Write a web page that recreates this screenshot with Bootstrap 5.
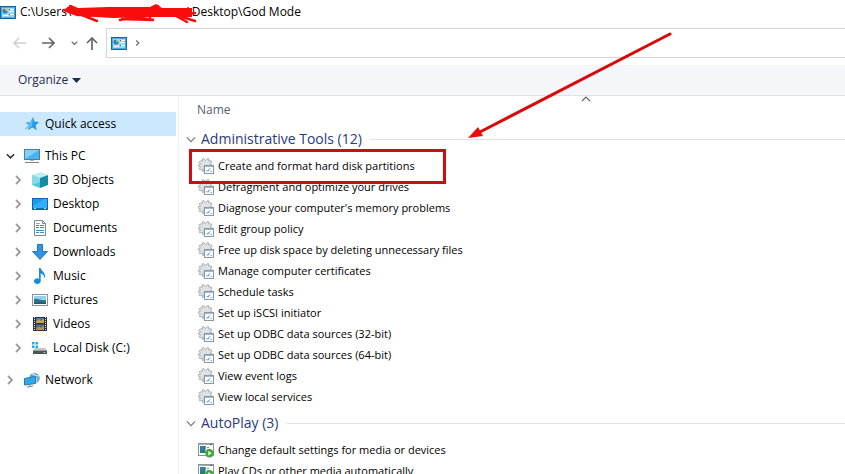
<!DOCTYPE html>
<html lang="en">
<head>
<meta charset="utf-8">
<meta name="viewport" content="width=device-width, initial-scale=1">
<title>God Mode</title>
<link href="https://cdn.jsdelivr.net/npm/bootstrap@5.3.0/dist/css/bootstrap.min.css" rel="stylesheet">
<style>
  body { font: 12px/20px "Open Sans", "Noto Sans", sans-serif; color: #000; background: #fff; }
  svg { display: block; flex: none; }
  a { color: inherit; text-decoration: none; }
  button { border: 0; padding: 0; background: none; color: inherit; line-height: inherit; }
  .titlebar { height: 28px; padding-bottom: 4px; }
  .hidden-part { width: 116px; }
  .navrow { height: 30px; padding-left: 13px; }
  .navrow .arrows { width: 93px; color: #666; }
  .address { border: 1px solid #d6d6d6; border-right: 0; color: #666; }
  .commands { margin-top: 7px; height: 31px; background: #f4f6f9; border-bottom: 1px solid #dfe3e8; color: #1e2b4c; padding-left: 18px; }
  .sidebar { width: 179px; padding-top: 16px; border-right: 1px solid #f1f1f1; }
  .tree-row { height: 24px; padding-left: 6px; }
  .tree-row button { width: 18px; color: #999; }
  .tree-row a { gap: 5px; }
  .tree-row.child { padding-left: 14px; }
  .tree-row.selected { background: #cce8ff; margin-right: 2px; padding-left: 24px; }
  .tree-row.open button { color: #333; }
  .space-after { margin-bottom: 8px; }
  .files { padding-left: 7px; }
  .column-head { height: 27px; padding-left: 11px; color: #57606f; }
  .sort-mark { left: 60%; top: 0; }
  .group-head { height: 32px; font-size: 14px; color: #273a83; gap: 5px; }
  .group-head svg { color: #777; }
  .group-line { height: 1px; background: #dfe1e5; margin-left: 3px; }
  .entry { height: 21px; padding-left: 12px; gap: 4px; font-size: 11px; }
  .callout { left: 10px; top: 53px; height: 35px; width: 257px; border: 3px solid #d20a11; }
</style>
<script src="https://cdn.jsdelivr.net/npm/bootstrap@5.3.0/dist/js/bootstrap.bundle.min.js"></script>
</head>
<body class="vh-100 overflow-hidden position-relative d-flex flex-column">

<svg class="d-none" aria-hidden="true">
  <symbol id="panel" viewBox="0 0 16 13">
    <rect x=".5" y=".5" width="15" height="12" fill="#9ed6f2" stroke="#17659c"/>
    <path d="M1.500 1.500h13v10h-13z" fill="none" stroke="#4aa9dc"/>
    <circle cx="5" cy="5" r="2.400" fill="#fff"/><path d="M5 5V2.400A2.600 2.600 0 0 1 7.600 5z" fill="#e9a13b"/><path d="M5 5h2.600A2.600 2.600 0 1 1 5 2.400z" fill="#2784c4"/>
    <path d="M9.500 3.500h4M9.500 5.500h4M9.500 8.500h4M3 9.500h5" stroke="#fff"/><path d="M9 3.500h1M9 8.500h1" stroke="#1769a5"/>
  </symbol>
  <symbol id="right" viewBox="0 0 8 10"><path d="M2 1l4 4-4 4" fill="none" stroke="currentColor" stroke-width="1.800"/></symbol>
  <symbol id="down" viewBox="0 0 10 8"><path d="M1 2l4 4 4-4" fill="none" stroke="currentColor" stroke-width="1.800"/></symbol>
  <symbol id="thin-down" viewBox="0 0 12 8"><path d="M1 1.500l5 5 5-5" fill="none" stroke="currentColor" stroke-width="1.400"/></symbol>
  <symbol id="gear" viewBox="0 0 16 16">
    <path d="M4.500 3 4.300.8h1.800L7.500 2.600 9 .8h1.800L10.600 3l2.600-.2.800 1.600-1.900 1.700 2.200 1V8.500H6v4.700l-1.300.4-.4-2.500-2.300.9-1-1.300L2.500 8.900.5 8.300V6.800l2-.7L1 4.300 2 3z" fill="#dfe1e2" stroke="#a6aaad" stroke-width=".9"/>
    <rect x="6.500" y="7.500" width="9" height="8" fill="#fafcfe" stroke="#8798a8"/>
    <path d="M7 8.500h8" stroke="#aab8c4"/><path d="M8.500 12l1.300 1.300 2-2.800" fill="none" stroke="#4190d3"/><path d="M12.500 13.500h1.500" stroke="#9cabbb"/>
  </symbol>
  <symbol id="autoplay" viewBox="0 0 16 16">
    <rect x=".5" y="1.500" width="15" height="12" fill="#fff" stroke="#8a949a"/><path d="M1 2.500h14" stroke="#a6b0b5"/><path d="M12 2.500h2" stroke="#536169"/>
    <path d="M2 4h5.500v7H2z" fill="#24806e"/><path d="M2 4h5.500v3L2 9z" fill="#397ba2"/><path d="M9 5.500h2M9 7.500h2" stroke="#7794a4"/>
    <circle cx="11.500" cy="11.300" r="4.200" fill="#3daa35"/><path d="M10.300 9l3.400 2.300-3.400 2.300z" fill="#fff"/>
  </symbol>
</svg>

<header>
  <div class="titlebar d-flex align-items-center">
    <svg width="16" height="13"><use href="#panel"/></svg>
    <span class="ms-1">C:\Users\</span><span class="hidden-part flex-shrink-0"></span><span>\Desktop\God Mode</span>
  </div>
  <div class="navrow d-flex">
    <div class="arrows d-flex align-items-center">
      <button aria-label="Back"><svg width="13" height="12" fill="none" stroke="#cfcfcf" stroke-width="1.500"><path d="M13 6H1M6 1L1 6l5 5"/></svg></button>
      <button aria-label="Forward" class="ms-3"><svg width="13" height="12" fill="none" stroke="currentColor" stroke-width="1.700"><path d="M0 6h12M7 1l5 5-5 5"/></svg></button>
      <button aria-label="Recent locations" class="ms-3"><svg width="7" height="6"><use href="#down"/></svg></button>
      <button aria-label="Up" class="ms-2"><svg width="12" height="13" fill="none" stroke="currentColor" stroke-width="1.700"><path d="M6 13V1M1 6l5-5 5 5"/></svg></button>
    </div>
    <div class="address d-flex align-items-center flex-grow-1">
      <a href="#" aria-label="God Mode" class="ms-1 me-2"><svg width="16" height="13"><use href="#panel"/></svg></a>
      <svg width="5" height="8"><use href="#right"/></svg>
    </div>
  </div>
  <div class="commands d-flex align-items-center">
    <button class="d-flex align-items-center">Organize <svg class="ms-1" width="9" height="5"><path d="M0 0h9L4.500 5z" fill="#1e2b4c"/></svg></button>
  </div>
</header>

<div class="d-flex flex-grow-1">
  <nav class="sidebar flex-shrink-0" aria-label="Folders">
    <ul class="list-unstyled m-0">
      <li class="tree-row selected space-after d-flex align-items-center"><a href="#" class="d-flex align-items-center">
        <svg width="16" height="16"><path d="M9 1l1.500 4.600L15 6l-3.400 3.500 1.200 4.700-4.300-2.600L4 14l1-4.500L1.500 6.500 6.500 6z" fill="#239be8"/><path d="M9 2l-1 8-3.500 3L5.500 9 2 6.700 6.800 6z" fill="#5cbcf5"/><path d="M1.500 13l3-3" stroke="#5b8cab"/></svg>Quick access</a></li>
      <li class="tree-row open d-flex align-items-center"><button aria-label="Collapse This PC"><svg width="9" height="8"><use href="#down"/></svg></button><a href="#" class="d-flex align-items-center">
        <svg width="16" height="16"><rect x=".5" y="1.500" width="15" height="10" fill="#48b3ef" stroke="#4b7f9f"/><path d="M1 11V2h14z" fill="#7fd0fa"/><path d="M6 12.500h4" stroke="#a9b7c0"/><path d="M1 14.500h14" stroke="#758792"/></svg>This PC</a></li>
      <li class="tree-row child d-flex align-items-center"><button aria-label="Expand 3D Objects"><svg width="8" height="10"><use href="#right"/></svg></button><a href="#" class="d-flex align-items-center">
        <svg width="16" height="16"><path d="M0 3l9-3 7 3-8 3z" fill="#c1edf2"/><path d="M0 3l8 3v10l-8-3z" fill="#52c7d7"/><path d="M8 6l8-3v10l-8 3z" fill="#168ca4"/><path d="M0 3l8 3v4L0 13z" fill="#86dce6"/></svg>3D Objects</a></li>
      <li class="tree-row child d-flex align-items-center"><button aria-label="Expand Desktop"><svg width="8" height="10"><use href="#right"/></svg></button><a href="#" class="d-flex align-items-center">
        <svg width="16" height="16"><rect x=".5" y="2.500" width="15" height="11" fill="#159bf0" stroke="#0c69af"/><path d="M1 10l11-7h3v9H1z" fill="#35adf6"/><path d="M1 12.500h14" stroke="#0a68ad"/><path d="M2 12.500h2M12 12.500h2" stroke="#a3dcff"/></svg>Desktop</a></li>
      <li class="tree-row child d-flex align-items-center"><button aria-label="Expand Documents"><svg width="8" height="10"><use href="#right"/></svg></button><a href="#" class="d-flex align-items-center">
        <svg width="16" height="16"><path d="M2.500.5h8l3 3v12h-11z" fill="#fff" stroke="#7d8b94"/><path d="M10.500.5v3h3" fill="none" stroke="#7d8b94"/><path d="M4 5.500h3M4 7.500h3M8 5.500h4M8 7.500h4M4 10.500h8M4 12.500h3M8 12.500h4" stroke="#3491bc"/><path d="M4 3.500h4" stroke="#88afc3"/></svg>Documents</a></li>
      <li class="tree-row child d-flex align-items-center"><button aria-label="Expand Downloads"><svg width="8" height="10"><use href="#right"/></svg></button><a href="#" class="d-flex align-items-center">
        <svg width="16" height="16"><path d="M5.500.5h5v7h5L8 15.500.5 7.500h5z" fill="#3393e0" stroke="#2477bd"/></svg>Downloads</a></li>
      <li class="tree-row child d-flex align-items-center"><button aria-label="Expand Music"><svg width="8" height="10"><use href="#right"/></svg></button><a href="#" class="d-flex align-items-center">
        <svg width="16" height="16"><path d="M7 0h1.600c.4 3 5 4 4.400 9.500h-1C12 7 10.500 6 8.700 5.600V13a3.400 2.800 0 1 1-1.700-2.300z" fill="#168dde"/></svg>Music</a></li>
      <li class="tree-row child d-flex align-items-center"><button aria-label="Expand Pictures"><svg width="8" height="10"><use href="#right"/></svg></button><a href="#" class="d-flex align-items-center">
        <svg width="16" height="16"><rect x=".5" y="2.500" width="15" height="11" fill="#fff" stroke="#87949b"/><path d="M2 4h12v8H2z" fill="#91d1f4"/><path d="M2 7c4-1 7 2 12 1v4H2z" fill="#34718f"/><path d="M2 10.500c5-1 8 0 12-1V12H2z" fill="#285d71"/></svg>Pictures</a></li>
      <li class="tree-row child d-flex align-items-center"><button aria-label="Expand Videos"><svg width="8" height="10"><use href="#right"/></svg></button><a href="#" class="d-flex align-items-center">
        <svg width="16" height="16"><path d="M1 1h14v14H1z" fill="#303237"/><path d="M2.500 1v14M13.500 1v14" stroke="#dcdcdc" stroke-dasharray="1 1"/><path d="M4 2h8v5H4z" fill="#497bbd"/><path d="M4 6l3-3 2 2 3-2v4H4z" fill="#d1a649"/><path d="M4 8.500h8v5.500H4z" fill="#3f6aa6"/><path d="M4 13l3-3 2 2 3-3v5H4z" fill="#bc9143"/></svg>Videos</a></li>
      <li class="tree-row child space-after d-flex align-items-center"><button aria-label="Expand Local Disk (C:)"><svg width="8" height="10"><use href="#right"/></svg></button><a href="#" class="d-flex align-items-center">
        <svg width="16" height="16"><path d="M0 2h2.500v2.500H0zM3.500 2H6v2.500H3.500zM0 5.500h2.500V8H0zM3.500 5.500H6V8H3.500z" fill="#18afe3"/><path d="M3 8h10l2 2.500H1z" fill="#c4c8ca"/><path d="M1 10.500h14V14H1z" fill="#4d5559"/><path d="M11.500 12.500h2" stroke="#64e575"/></svg>Local Disk (C:)</a></li>
      <li class="tree-row d-flex align-items-center"><button aria-label="Expand Network"><svg width="8" height="10"><use href="#right"/></svg></button><a href="#" class="d-flex align-items-center">
        <svg width="16" height="16"><circle cx="10.500" cy="6" r="5.300" fill="#6ba9cf"/><path d="M8 2c3 0 4 2 7 2M9 1c3 3 4 6 3 10" fill="none" stroke="#d1eaf6"/><path d="M.5 6.500l11-2v7l-11 1.500z" fill="#33a8e9" stroke="#217bac"/><path d="M3 15l6-1M6 12v2" stroke="#6e8795"/></svg>Network</a></li>
    </ul>
  </nav>

  <main class="files flex-grow-1 position-relative">
    <div class="column-head d-flex align-items-center"><button>Name</button>
      <svg class="sort-mark position-absolute" width="12" height="6"><path d="M3 5l4-4 4 4" fill="none" stroke="#666" stroke-width="1.200"/></svg>
    </div>
    <section>
      <h2 class="group-head d-flex align-items-center m-0 fw-normal"><svg width="10" height="7"><use href="#thin-down"/></svg>Administrative Tools (12)<span class="group-line flex-grow-1"></span></h2>
      <ul class="list-unstyled m-0">
        <li><a href="#" class="entry d-flex align-items-center"><svg width="16" height="16"><use href="#gear"/></svg>Create and format hard disk partitions</a></li>
        <li><a href="#" class="entry d-flex align-items-center"><svg width="16" height="16"><use href="#gear"/></svg>Defragment and optimize your drives</a></li>
        <li><a href="#" class="entry d-flex align-items-center"><svg width="16" height="16"><use href="#gear"/></svg>Diagnose your computer's memory problems</a></li>
        <li><a href="#" class="entry d-flex align-items-center"><svg width="16" height="16"><use href="#gear"/></svg>Edit group policy</a></li>
        <li><a href="#" class="entry d-flex align-items-center"><svg width="16" height="16"><use href="#gear"/></svg>Free up disk space by deleting unnecessary files</a></li>
        <li><a href="#" class="entry d-flex align-items-center"><svg width="16" height="16"><use href="#gear"/></svg>Manage computer certificates</a></li>
        <li><a href="#" class="entry d-flex align-items-center"><svg width="16" height="16"><use href="#gear"/></svg>Schedule tasks</a></li>
        <li><a href="#" class="entry d-flex align-items-center"><svg width="16" height="16"><use href="#gear"/></svg>Set up iSCSI initiator</a></li>
        <li><a href="#" class="entry d-flex align-items-center"><svg width="16" height="16"><use href="#gear"/></svg>Set up ODBC data sources (32-bit)</a></li>
        <li><a href="#" class="entry d-flex align-items-center"><svg width="16" height="16"><use href="#gear"/></svg>Set up ODBC data sources (64-bit)</a></li>
        <li><a href="#" class="entry d-flex align-items-center"><svg width="16" height="16"><use href="#gear"/></svg>View event logs</a></li>
        <li><a href="#" class="entry d-flex align-items-center"><svg width="16" height="16"><use href="#gear"/></svg>View local services</a></li>
      </ul>
    </section>
    <section>
      <h2 class="group-head d-flex align-items-center m-0 fw-normal"><svg width="10" height="7"><use href="#thin-down"/></svg>AutoPlay (3)<span class="group-line flex-grow-1"></span></h2>
      <ul class="list-unstyled m-0">
        <li><a href="#" class="entry d-flex align-items-center"><svg width="16" height="16"><use href="#autoplay"/></svg>Change default settings for media or devices</a></li>
        <li><a href="#" class="entry d-flex align-items-center"><svg width="16" height="16"><use href="#autoplay"/></svg>Play CDs or other media automatically</a></li>
      </ul>
    </section>
    <div class="callout position-absolute"></div>
  </main>
</div>

<svg class="position-absolute top-0 start-0 pe-none" width="845" height="160" aria-hidden="true">
  <path d="M64 10l7-5 7 3 30-1h42l6-3 6 4h30v9h-50l-28 1-37-2-8-3z" fill="#f80d0d"/>
  <path d="M67 9l30 12M70 6l20 10M80 11h108M80 14h108M120 20l35-8M122 19l32 1-30-5M150 17l8-11M165 10l22 12M173 14l22 7M180 15l15-2M64 10l14 5" fill="none" stroke="#f80d0d" stroke-width="2.500" stroke-linecap="round"/>
  <path d="M670 34L478 133" stroke="#d90a0a" stroke-width="3" stroke-linecap="round"/>
  <path d="M468 138l10-11 5 9z" fill="#f00b0b"/>
</svg>
</body>
</html>
